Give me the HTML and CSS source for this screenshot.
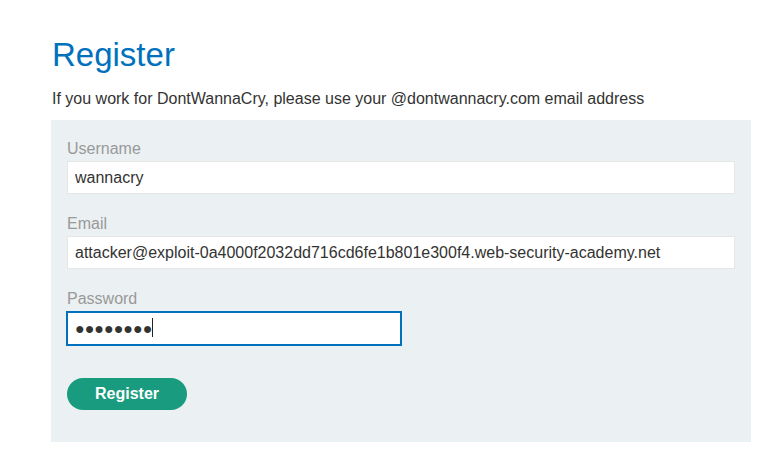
FILE: index.html
```html
<!DOCTYPE html>
<html>
<head>
<meta charset="utf-8">
<link rel="stylesheet" href="styles.css">
</head>
<body>
<div class="page">
  <h1 class="title">Register</h1>
  <p class="intro">If you work for DontWannaCry, please use your @dontwannacry.com email address</p>
  <form class="panel">
    <label class="label">Username</label>
    <input class="field" type="text" value="wannacry">
    <label class="label">Email</label>
    <input class="field" type="text" value="attacker@exploit-0a4000f2032dd716cd6fe1b801e300f4.web-security-academy.net">
    <label class="label">Password</label>
    <div class="pw-wrap">
      <input class="field field-short field-focus" type="text" value="●●●●●●●●">
      <span class="caret"></span>
    </div>
    <button class="btn" type="button">Register</button>
  </form>
</div>
</body>
</html>
```

FILE: styles.css
```css
html, body {
  margin: 0;
  padding: 0;
  background: #ffffff;
}
body {
  font-family: "Liberation Sans", Arial, sans-serif;
  color: #333332;
}
.page {
  padding: 35px 32px 0 51px;
}
.title {
  margin: 0 0 14px 1px;
  font-size: 33px;
  line-height: 40px;
  font-weight: normal;
  color: #0071bc;
}
.intro {
  margin: 0 0 11px 1px;
  font-size: 16px;
  line-height: 20px;
}
.panel {
  width: 700px;
  box-sizing: border-box;
  background: #ebf0f2;
  padding: 19px 16px 32px 16px;
  display: flex;
  flex-direction: column;
  align-items: flex-start;
}
.label {
  font-size: 16px;
  line-height: 20px;
  color: #999999;
  margin-bottom: 2px;
}
.field {
  box-sizing: border-box;
  width: 668px;
  height: 33px;
  margin: 0 0 20px 0;
  padding: 0 7px;
  border: 1px solid #e6e6e6;
  background: #ffffff;
  font-family: "Liberation Sans", Arial, sans-serif;
  font-size: 16px;
  color: #333332;
  outline: none;
  display: block;
}
.pw-wrap {
  position: relative;
  margin-top: 1px;
  margin-bottom: 33px;
}
.field-short {
  width: 334px;
  margin: 0;
}
.field-focus {
  border-color: #0071bc;
  box-shadow: 0 0 0 1px #0071bc;
}
.caret {
  position: absolute;
  left: 85px;
  top: 6px;
  width: 1px;
  height: 19px;
  background: #222222;
}
.btn {
  width: 120px;
  height: 32px;
  border: none;
  border-radius: 16px;
  background: #189b7e;
  color: #ffffff;
  font-family: "Liberation Sans", Arial, sans-serif;
  font-weight: bold;
  font-size: 16px;
  padding: 0;
}
```
